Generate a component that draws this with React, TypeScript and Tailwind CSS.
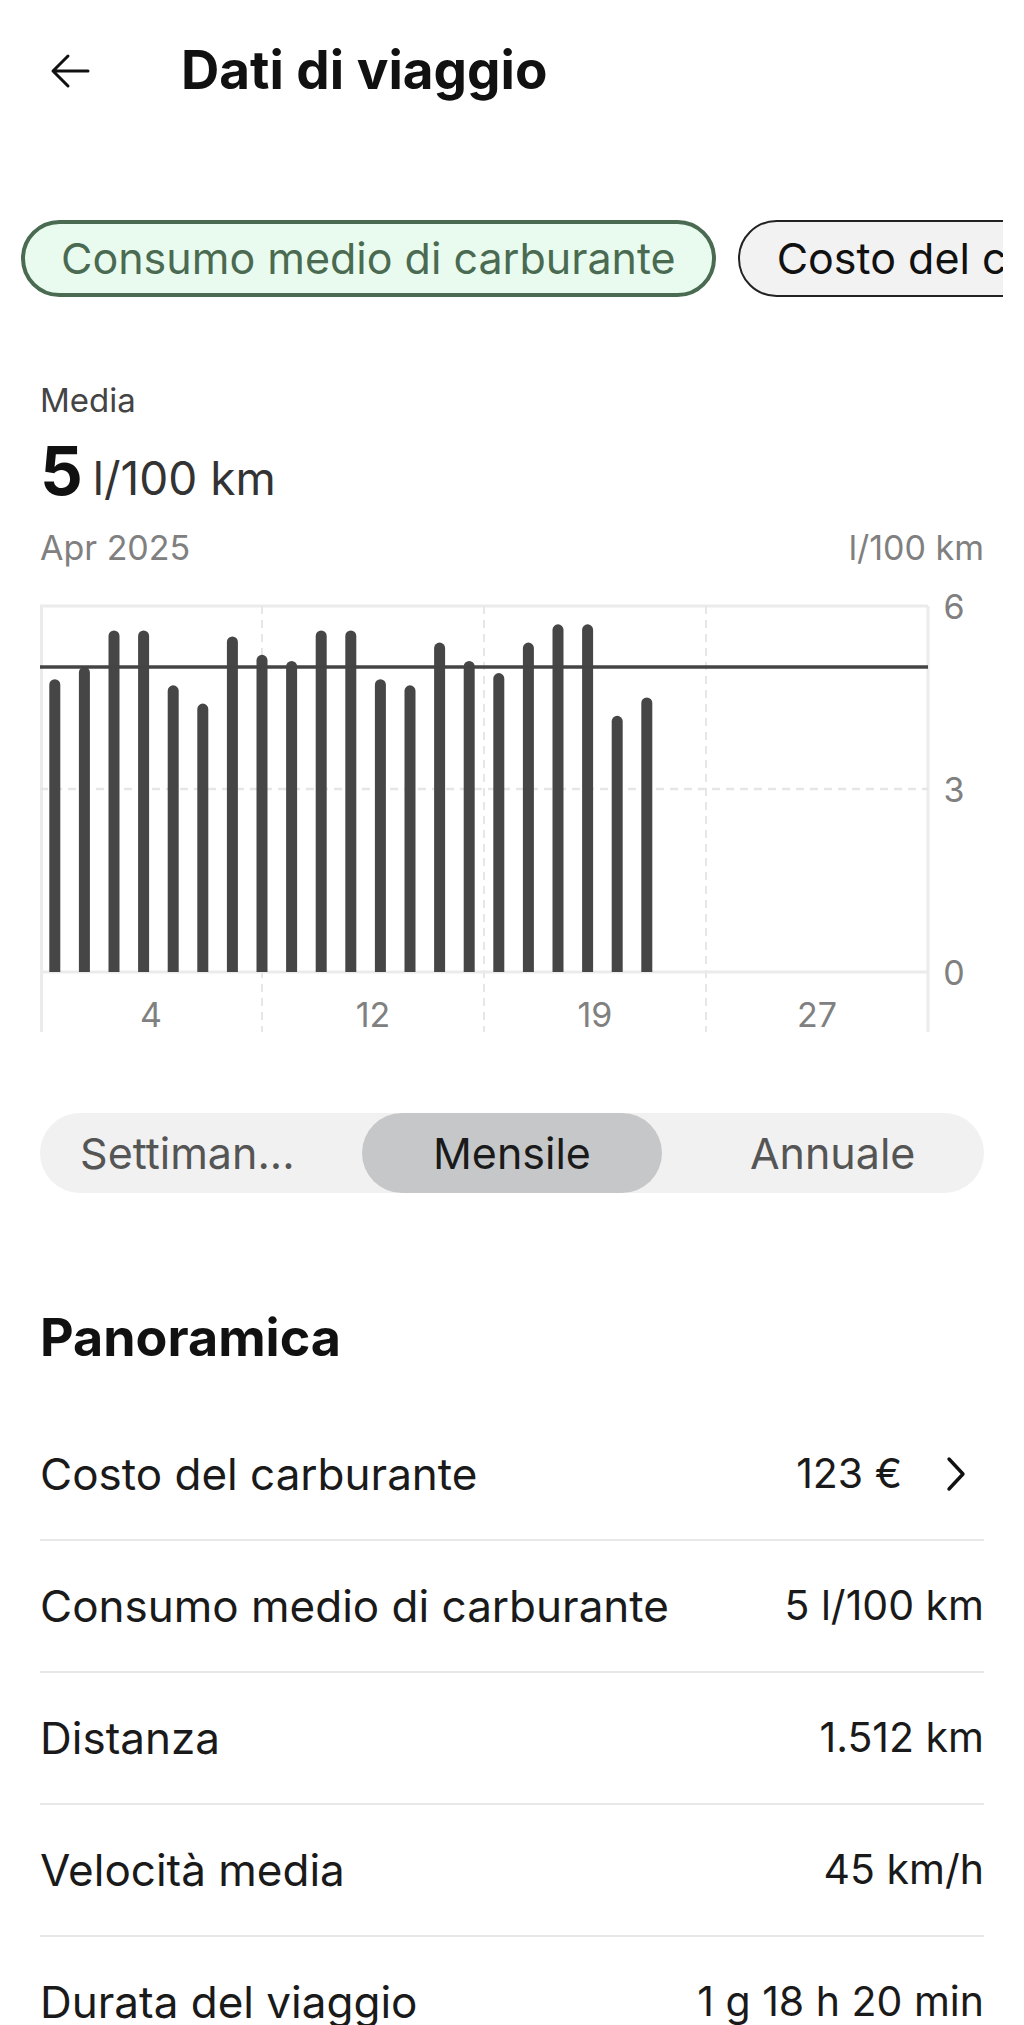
const VALUES = [
  4.8, 5.0, 5.6, 5.6, 4.7, 4.4, 5.5, 5.2, 5.1, 5.6, 5.6, 4.8, 4.7, 5.4, 5.1,
  4.9, 5.4, 5.7, 5.7, 4.2, 4.5,
];

const ROWS = [
  { label: "Costo del carburante", value: "123 €", link: true },
  { label: "Consumo medio di carburante", value: "5 l/100 km" },
  { label: "Distanza", value: "1.512 km" },
  { label: "Velocità media", value: "45 km/h" },
  { label: "Durata del viaggio", value: "1 g 18 h 20 min" },
  { label: "Numero di viaggi", value: "64" },
];

function BackIcon() {
  return (
    <svg width="44" height="44" viewBox="0 0 44 44" fill="none">
      <path
        d="M40 22H6M20 7L5 22l15 15"
        stroke="#111"
        strokeWidth="3"
        strokeLinecap="round"
        strokeLinejoin="round"
      />
    </svg>
  );
}

function Chevron() {
  return (
    <svg width="24" height="36" viewBox="0 0 24 36" fill="none" className="ml-[42px] mr-[16px]">
      <path
        d="M5 3l14 15L5 33"
        stroke="#111"
        strokeWidth="3.4"
        strokeLinecap="round"
        strokeLinejoin="round"
      />
    </svg>
  );
}

function Chart() {
  const plotW = 888;
  const top = 22;
  const base = 388;
  const unit = (base - top) / 6;
  const step = plotW / 30;
  const font = "Inter, sans-serif";

  return (
    <svg width="944" height="455" viewBox="0 0 944 455" className="overflow-visible">
      <line x1="0" y1={top} x2={plotW} y2={top} stroke="#ebebeb" strokeWidth="3" />
      <line x1="1.5" y1={top} x2="1.5" y2="448" stroke="#ebebeb" strokeWidth="3" />
      <line x1={plotW} y1={top} x2={plotW} y2="448" stroke="#ebebeb" strokeWidth="3" />
      {[222, 444, 666].map((x) => (
        <line
          key={x}
          x1={x}
          y1={top}
          x2={x}
          y2="448"
          stroke="#e6e6e6"
          strokeWidth="2"
          strokeDasharray="8 6"
        />
      ))}
      <line
        x1="0"
        y1={top + 3 * unit}
        x2={plotW}
        y2={top + 3 * unit}
        stroke="#e6e6e6"
        strokeWidth="2.5"
        strokeDasharray="8 6"
      />
      <line x1="0" y1={base} x2={plotW} y2={base} stroke="#ebebeb" strokeWidth="3" />

      {VALUES.map((v, i) => {
        const cx = step * (i + 0.5);
        const y = base - v * unit;
        return (
          <path
            key={i}
            d={`M${cx - 5.5} ${base} V${y + 5.5} A5.5 5.5 0 0 1 ${cx + 5.5} ${y + 5.5} V${base} Z`}
            fill="#464646"
          />
        );
      })}

      <line
        x1="0"
        y1={base - 5 * unit}
        x2={plotW}
        y2={base - 5 * unit}
        stroke="#444"
        strokeWidth="3.5"
      />

      {[
        ["6", top],
        ["3", top + 3 * unit],
        ["0", base],
      ].map(([t, y]) => (
        <text
          key={t}
          x="914"
          y={Number(y)}
          dominantBaseline="central"
          textAnchor="middle"
          fontFamily={font}
          fontSize="34"
          fill="#808080"
        >
          {t}
        </text>
      ))}
      {[
        ["4", 111],
        ["12", 333],
        ["19", 555],
        ["27", 777],
      ].map(([t, x]) => (
        <text
          key={t}
          x={Number(x)}
          y="430"
          dominantBaseline="central"
          textAnchor="middle"
          fontFamily={font}
          fontSize="34"
          fill="#808080"
        >
          {t}
        </text>
      ))}
    </svg>
  );
}

export default function App() {
  return (
    <div className="h-[2025px] w-[1024px] overflow-hidden bg-white font-['Inter',sans-serif] text-[#111]">
      <header className="flex h-[142px] items-center">
        <div className="ml-[48px] flex w-[44px] items-center">
          <BackIcon />
        </div>
        <h1 className="ml-[89px] text-[53px] font-bold">Dati di viaggio</h1>
      </header>

      <div className="ml-[21px] mr-[21px] mt-[78px] flex gap-[22px] overflow-hidden">
        <div className="flex h-[77px] shrink-0 items-center rounded-full border-4 border-[#4a6b51] bg-[#e9fbef] px-[36px] text-[43px] text-[#4a6b51]">
          Consumo medio di carburante
        </div>
        <div className="flex h-[77px] shrink-0 items-center rounded-full border-2 border-[#222] bg-[#f2f2f2] px-[37px] text-[43px] text-[#111]">
          Costo del carburante
        </div>
      </div>

      <section className="px-10">
        <div className="mt-[85px] text-[33px] leading-[36px] text-[#444]">Media</div>
        <div className="mt-[13px] flex h-[80px] items-baseline gap-[10px] leading-[80px]">
          <span className="text-[67px] font-bold">5</span>
          <span className="text-[46px] text-[#333]">l/100 km</span>
        </div>
        <div className="mt-[19px] flex justify-between text-[34px] leading-[36px] text-[#808080]">
          <span>Apr 2025</span>
          <span>l/100 km</span>
        </div>
        <div className="mt-[18px]">
          <Chart />
        </div>

        <div className="mt-[74px] grid h-[80px] grid-cols-3 rounded-full bg-[#f1f1f1] text-[43px]">
          <div className="flex items-center justify-center pr-[20px] text-[#555]">Settiman...</div>
          <div className="mx-[7px] flex items-center justify-center rounded-full bg-[#c6c7c9] text-[#1a1a1a]">
            Mensile
          </div>
          <div className="flex items-center justify-center pl-[12px] text-[#555]">Annuale</div>
        </div>

        <h2 className="mt-[115px] text-[52px] font-bold leading-[60px]">Panoramica</h2>

        <div className="mt-[41px]">
          {ROWS.map((row) => (
            <div
              key={row.label}
              className="flex h-[132px] items-center justify-between border-b-2 border-[#e8e8e8] text-[#1a1a1a]"
            >
              <span className="text-[44px]">{row.label}</span>
              <span className="flex items-center text-[41px]">
                {row.value}
                {row.link && <Chevron />}
              </span>
            </div>
          ))}
        </div>
      </section>
    </div>
  );
}
